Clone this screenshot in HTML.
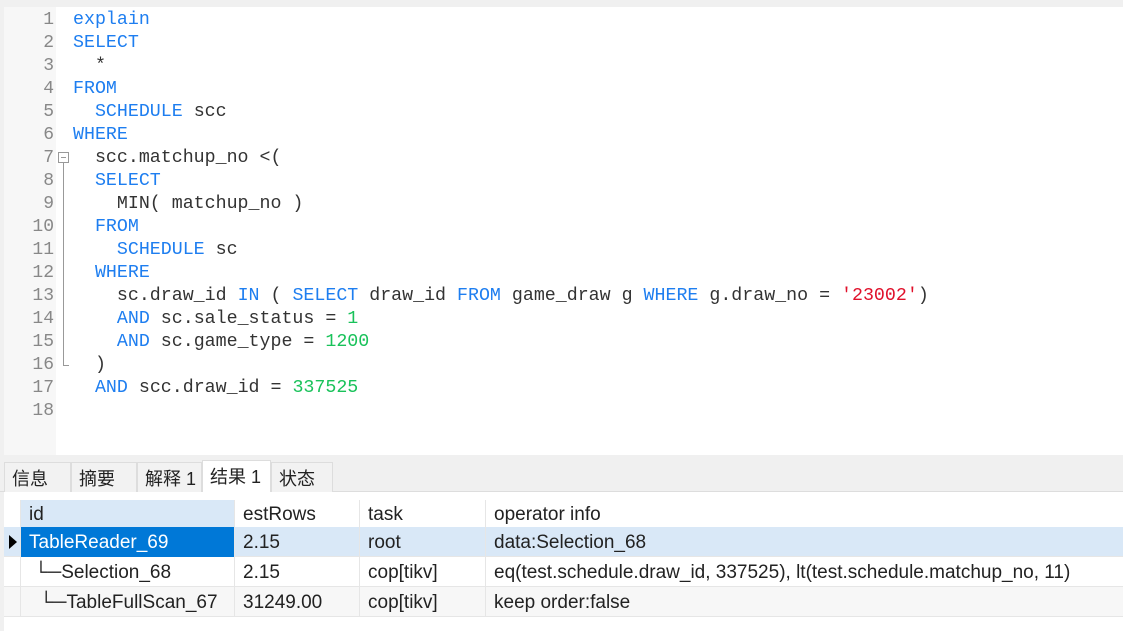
<!DOCTYPE html>
<html><head><meta charset="utf-8"><style>
*{margin:0;padding:0;box-sizing:border-box}
body{width:1123px;height:631px;background:#f0f0f0;position:relative;overflow:hidden;font-family:"Liberation Sans","Noto Sans CJK SC",sans-serif}
.ed{position:absolute;left:4px;top:7px;width:1119px;height:448px;background:#fff}
.gut{position:absolute;left:0;top:0;width:52px;height:448px;background:#f7f7f7}
.ln{position:absolute;left:0;top:2px;width:50px;text-align:right;font:18px "Liberation Mono",monospace;color:#888;line-height:23px}
.cd{position:absolute;left:69px;top:2px;font:18.3px "Liberation Mono",monospace;color:#333;line-height:23px;white-space:pre}
.k{color:#1e7ef0}.n{color:#19c25a}.s{color:#e0102a}
.tabs{position:absolute;top:460px;left:4px;height:32px}
.tab{position:absolute;top:2px;height:30px;background:#f2f2f2;border:1px solid #ddd;border-bottom:none;font-size:18px;padding:2px 0 0 7px;color:#222}
.tab.a{background:#fff;top:0;height:32px;padding-top:2px}
.grid{position:absolute;left:4px;top:492px;width:1119px;height:139px;background:#fff}
.row{position:absolute;left:0;width:1119px;height:30px;border-bottom:1px solid #e6e6e6;font-size:19px;color:#222}
.c{position:absolute;top:0;height:30px;line-height:32px;padding-left:8px;border-left:1px solid #e6e6e6;white-space:nowrap}
</style></head><body>
<div class="ed">
<div class="gut"></div>
<div class="ln">1<br>2<br>3<br>4<br>5<br>6<br>7<br>8<br>9<br>10<br>11<br>12<br>13<br>14<br>15<br>16<br>17<br>18</div>
<div style="position:absolute;left:54px;top:145px;width:11px;height:11px;border:1px solid #999;background:#fff"></div>
<div style="position:absolute;left:57px;top:150px;width:5px;height:1px;background:#999"></div>
<div style="position:absolute;left:59px;top:156px;width:1px;height:202px;background:#999"></div>
<div style="position:absolute;left:59px;top:358px;width:6px;height:1px;background:#999"></div>
<div class="cd"><span class="k">explain</span>
<span class="k">SELECT</span>
  *
<span class="k">FROM</span>
  <span class="k">SCHEDULE</span> scc
<span class="k">WHERE</span>
  scc.matchup_no &lt;(
  <span class="k">SELECT</span>
    MIN( matchup_no )
  <span class="k">FROM</span>
    <span class="k">SCHEDULE</span> sc
  <span class="k">WHERE</span>
    sc.draw_id <span class="k">IN</span> ( <span class="k">SELECT</span> draw_id <span class="k">FROM</span> game_draw g <span class="k">WHERE</span> g.draw_no = <span class="s">'23002'</span>)
    <span class="k">AND</span> sc.sale_status = <span class="n">1</span>
    <span class="k">AND</span> sc.game_type = <span class="n">1200</span>
  )
  <span class="k">AND</span> scc.draw_id = <span class="n">337525</span>
</div>
</div>
<div style="position:absolute;left:0;top:455px;width:1123px;height:5px;background:#f0f0f0"></div>
<div style="position:absolute;left:0;top:491px;width:1123px;height:1px;background:#ddd"></div>
<div class="tabs">
<div class="tab" style="left:0;width:67px">信息</div>
<div class="tab" style="left:67px;width:66px">摘要</div>
<div class="tab" style="left:133px;width:65px">解释 1</div>
<div class="tab a" style="left:198px;width:69px">结果 1</div>
<div class="tab" style="left:267px;width:62px">状态</div>
</div>
<div class="grid">
<div class="row" style="top:8px;height:28px">
<div class="c" style="left:16px;width:214px;background:#d9e8f7;height:27px;line-height:29px">id</div>
<div class="c" style="left:230px;width:125px;height:27px;line-height:29px">estRows</div>
<div class="c" style="left:355px;width:120px;height:27px;line-height:29px">task</div>
<div class="c" style="left:481px;width:638px;height:27px;line-height:29px">operator info</div>
</div>
<div class="row" style="top:35px;background:#d9e8f7">
<div style="position:absolute;left:5px;top:8px;width:0;height:0;border-top:7px solid transparent;border-bottom:7px solid transparent;border-left:8px solid #000"></div>
<div class="c" style="left:16px;width:214px;background:#0078d7;color:#fff">TableReader_69</div>
<div class="c" style="left:230px;width:125px">2.15</div>
<div class="c" style="left:355px;width:120px">root</div>
<div class="c" style="left:481px;width:638px">data:Selection_68</div>
</div>
<div class="row" style="top:65px">
<div class="c" style="left:16px;width:214px">&nbsp;└─Selection_68</div>
<div class="c" style="left:230px;width:125px">2.15</div>
<div class="c" style="left:355px;width:120px">cop[tikv]</div>
<div class="c" style="left:481px;width:638px">eq(test.schedule.draw_id, 337525), lt(test.schedule.matchup_no, 11)</div>
</div>
<div class="row" style="top:95px;background:#f7f7f7">
<div class="c" style="left:16px;width:214px">&nbsp;&nbsp;└─TableFullScan_67</div>
<div class="c" style="left:230px;width:125px">31249.00</div>
<div class="c" style="left:355px;width:120px">cop[tikv]</div>
<div class="c" style="left:481px;width:638px">keep order:false</div>
</div>
</div>
</body></html>
